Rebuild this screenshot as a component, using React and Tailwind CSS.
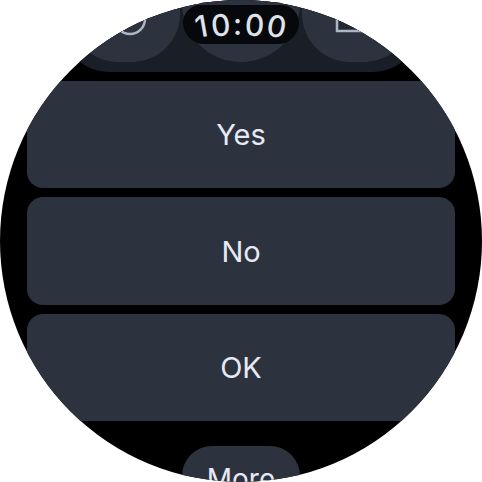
import React from 'react';

const answers = ['Yes', 'No', 'OK'];

// digits sit on the curve of the round screen
const timeChars = [
  { c: '1', cls: '-rotate-[10deg] translate-y-[1px]' },
  { c: '0', cls: '-rotate-[5deg]' },
  { c: ':', cls: '-translate-y-[1px]' },
  { c: '0', cls: 'rotate-[4deg]' },
  { c: '0', cls: 'rotate-[10deg] translate-y-[1px]' },
];

const App = () => {
  return (
    <div className="w-[482px] h-[482px] bg-white overflow-hidden" style={{ fontFamily: 'Inter, sans-serif' }}>
      <div className="relative w-[482px] h-[482px] rounded-full bg-black overflow-hidden flex flex-col items-center">
        {/* Header */}
        <div className="relative w-full h-[81px] shrink-0 flex justify-center">
          <div className="w-[362px] h-[72px] rounded-b-[50px] bg-[#191e27] flex items-end justify-center gap-[2px] pb-[10px]">
            <div className="w-[110px] h-[122px] shrink-0 rounded-[48px] bg-[#2d333e] flex items-end justify-center pl-[10px] pb-[26px]">
              <svg width="34" height="34" viewBox="0 0 34 34" fill="none" stroke="#aeb6c6" strokeWidth="2.5">
                <circle cx="17" cy="17" r="15" />
              </svg>
            </div>
            <div className="w-[118px] h-[118px] shrink-0 rounded-full bg-[#2d333e]" />
            <div className="w-[110px] h-[122px] shrink-0 rounded-[48px] bg-[#2d333e] flex items-end justify-center pr-[10px] pb-[29px]">
              <svg width="34" height="28" viewBox="0 0 34 28" fill="none" stroke="#aeb6c6" strokeWidth="2.5">
                <rect x="2" y="2" width="30" height="24" fill="#232833" />
              </svg>
            </div>
          </div>
          <div className="absolute top-[5px] left-1/2 -translate-x-1/2 w-[116px] h-[39px] rounded-t-[20px] rounded-b-[24px] bg-[#06080b] flex items-center justify-center text-[#dfe2e8] text-[30px] font-medium leading-none gap-[3px]">
            {timeChars.map((t, i) => (
              <span key={i} className={`inline-block ${t.cls}`}>{t.c}</span>
            ))}
          </div>
        </div>

        <div className="flex flex-col gap-[9px] w-[428px]">
          {answers.map((a) => (
            <div key={a} className="h-[107.33px] rounded-[16px] bg-[#2d333e] flex items-center justify-center pt-[1px] text-[#e6eaf5] text-[29px]">
              {a}
            </div>
          ))}
        </div>

        <div className="mt-[25px] w-[118px] h-[60px] shrink-0 rounded-[30px] bg-[#2d333e] flex justify-center pt-[12px] text-[#e6eaf5] text-[28px]">
          More
        </div>
      </div>
    </div>
  );
};

export default App;
